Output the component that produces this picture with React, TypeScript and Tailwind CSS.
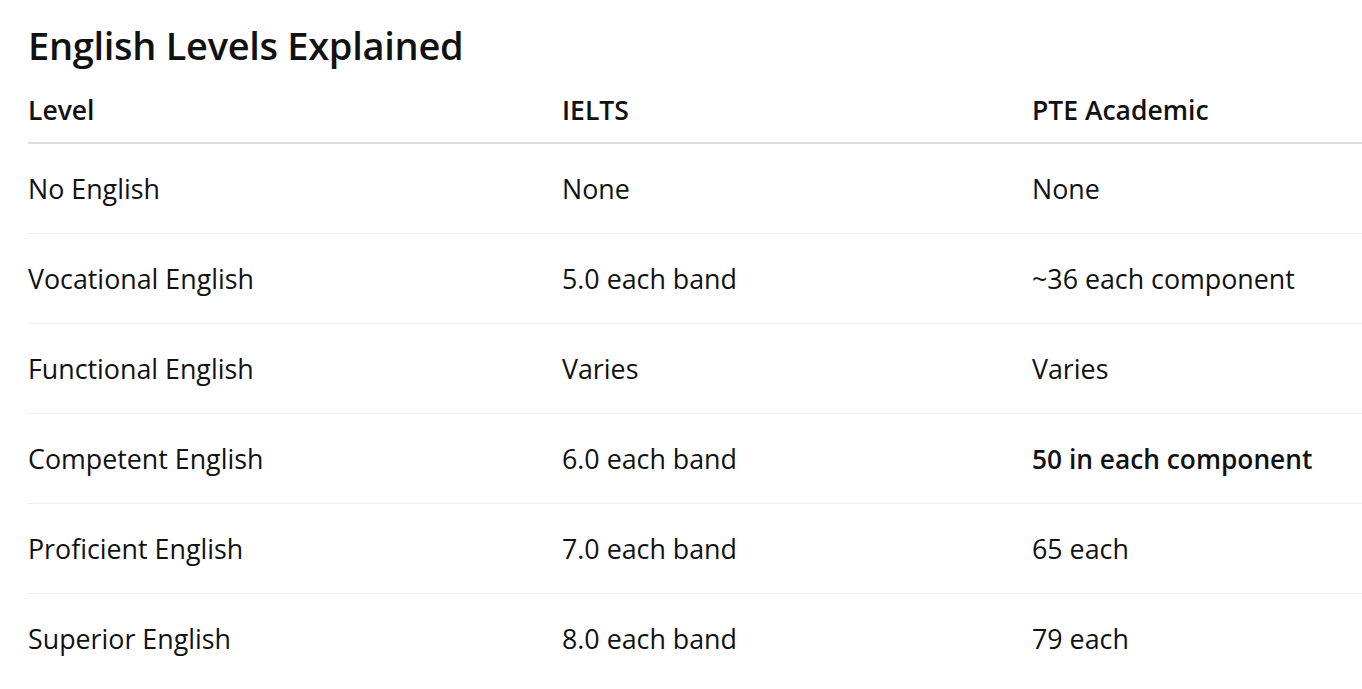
import React from "react";

const rows: { level: string; ielts: string; pte: string; bold?: boolean }[] = [
  { level: "No English", ielts: "None", pte: "None" },
  { level: "Vocational English", ielts: "5.0 each band", pte: "~36 each component" },
  { level: "Functional English", ielts: "Varies", pte: "Varies" },
  { level: "Competent English", ielts: "6.0 each band", pte: "50 in each component", bold: true },
  { level: "Proficient English", ielts: "7.0 each band", pte: "65 each" },
  { level: "Superior English", ielts: "8.0 each band", pte: "79 each" },
];

export default function App() {
  return (
    <div
      className="min-h-[689px] w-[1362px] bg-white pl-[28px] text-[#111111] overflow-hidden"
      style={{ fontFamily: '"Open Sans", "Noto Sans", sans-serif' }}
    >
      <h1 className="pt-[21px] text-[38px] font-semibold leading-[48px] tracking-[-0.3px]">
        English Levels Explained
      </h1>
      <div className="w-[1334px]">
        <div className="grid h-[75px] grid-cols-[534px_470px_1fr] items-end border-b-2 border-[#dddddd] pb-[14px] text-[26.5px] font-semibold leading-[36px]">
          <div>Level</div>
          <div>IELTS</div>
          <div>PTE Academic</div>
        </div>
        {rows.map((r, i) => (
          <div
            key={r.level}
            className={`grid h-[90px] grid-cols-[534px_470px_1fr] items-center text-[26.8px] leading-[36px] ${
              i < rows.length - 1 ? "border-b border-[#eeeeee]" : ""
            }`}
          >
            <div>{r.level}</div>
            <div>{r.ielts}</div>
            <div className={r.bold ? "font-semibold text-[26.3px]" : ""}>{r.pte}</div>
          </div>
        ))}
      </div>
    </div>
  );
}
